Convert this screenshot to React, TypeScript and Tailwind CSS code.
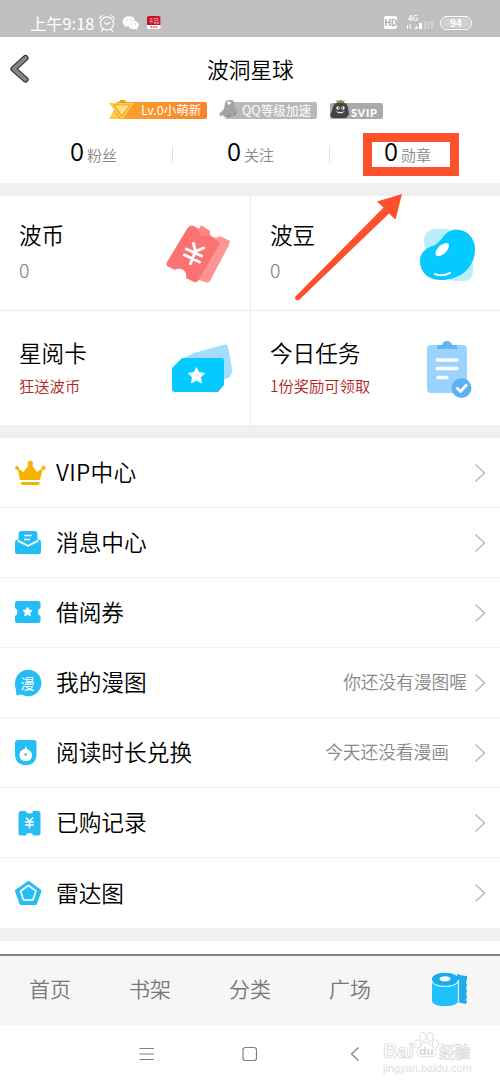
import React from "react";

const Star = ({ x, y, r, fill = "#fff" }: { x: number; y: number; r: number; fill?: string }) => {
  const pts = Array.from({ length: 10 }, (_, i) => {
    const a = (Math.PI * i) / 5 - Math.PI / 2;
    const q = i % 2 ? r * 0.5 : r;
    return `${x + q * Math.cos(a)},${y + q * Math.sin(a)}`;
  }).join(" ");
  return <polygon points={pts} fill={fill} stroke={fill} strokeWidth="0.8" strokeLinejoin="round" />;
};

function StatusBar() {
  return (
    <div className="flex h-[37px] items-start bg-[#bfbfbf] pl-[30px] pt-[14px] text-white">
      <span className="w-[62px] whitespace-nowrap text-[16.3px] font-normal leading-[18px]">上午9:18</span>
      <svg className="ml-[6px] h-[18px] w-[64px]" viewBox="98 14 64 18" fill="none">
        <g stroke="#fff" strokeWidth="1.2" strokeLinecap="round">
          <circle cx="107" cy="23.5" r="6.6" />
          <path d="M104.3 22.3l2.7 2.2 3-2.2M99.5 18.3l3-2.7M114.5 18.3l-3-2.7M103 29.5l-1.5 1.5M111 29.5l1.5 1.5" />
        </g>
        <path d="M129 16.2c-3.6 0-6.3 2.3-6.3 5.2 0 1.7.9 3 2.3 4l-.5 2 2.2-1.2 2 .3c-.6-4 2.6-6.4 6.4-6.2-.5-2.4-3-4.1-6.1-4.1z" fill="#fff" />
        <path d="M133.7 20.8c-3 0-5.2 1.9-5.2 4.2s2.2 4.2 5.2 4.2l1.6-.2 2 1-.5-1.7c1.2-.8 2-2 2-3.3 0-2.3-2.3-4.2-5.1-4.2z" fill="#fff" />
        <g fill="#bfbfbf"><circle cx="127" cy="20" r=".8" /><circle cx="131" cy="20" r=".8" /><circle cx="132" cy="24" r=".7" /><circle cx="135.5" cy="24" r=".7" /></g>
        <rect x="147" y="16" width="13.5" height="13" rx="1.5" fill="#fff" />
        <path d="M147 25v-7.5q0-1.5 1.5-1.5h10.5q1.5 0 1.5 1.5V25z" fill="#c3142d" />
        <path d="M149.5 19h3.5M151 18v5.5M149.5 21.5h3.5M154.5 18.3h3.5v2h-3.5zM154.2 22h1.5v1.5h-1.5zM157 22h1.5v1.5H157z" stroke="#f3a9b0" strokeWidth=".7" />
        <path d="M150.5 27h7" stroke="#d24b59" strokeWidth="1.5" strokeDasharray="1.7 .8" />
      </svg>
      <div className="ml-[222px] mt-[2px] flex h-[13px] w-[13px] items-center justify-center rounded-[2px] bg-white text-[9px] font-bold leading-none tracking-tighter text-[#aaa]">HD</div>
      <div className="ml-[9px] w-[27px]">
        <div className="pl-[2px] text-[8px] font-medium leading-[7px]">4G</div>
        <svg className="block h-[14px] w-[27px]" viewBox="405 21 27 14">
          <path d="M406.5 29v-4M409.2 24v5" stroke="#fff" strokeWidth="1" />
          <path d="M413 29l3.5-3.5V29zM418 23h3v6h-3z" fill="#fff" />
          <path d="M423 21h2v8h-2zM426.5 19h2v10h-2zM430 17h2v12h-2z" fill="#d2d2d2" />
        </svg>
      </div>
      <div className="ml-[7px] mt-[2px] flex h-[14px] w-[32px] items-center justify-center rounded-full border border-white p-[1px]">
        <div className="flex h-full w-full items-center justify-center rounded-full bg-[#d0d0d0] text-[10px] font-bold leading-none">94</div>
      </div>
    </div>
  );
}

function Badges() {
  return (
    <div className="flex h-[22px] pl-[109px] pt-[2px]">
      <div className="relative mt-[1px] flex h-[17px] w-[98px] items-center rounded-[2px] bg-linear-to-r from-[#f9a52d] to-[#f9822d] pl-[32px]">
        <svg className="absolute -top-[2px] left-0 h-[20px] w-[32px]" viewBox="109 100 32 20">
          <path d="M108 101h9l-3 5v14h-6z" fill="#fff" />
          <path d="M109 103h25l-12 17zM109 119l5-9 5 9z" fill="#ffcc44" />
          <path d="M114 105h16l-8 11z" fill="#ffe48a" stroke="#f9a12d" strokeWidth="1.2" />
          <path d="M118.5 103l1.5-3h5l1.5 3z" fill="#e9a12e" />
        </svg>
        <span className="whitespace-nowrap text-[12.5px] font-normal leading-none text-white">Lv.0小萌新</span>
      </div>
      <div className="relative ml-[18px] mt-[1px] flex h-[17px] w-[92px] items-center rounded-[2px] bg-[#b9b9b9] pl-[17px]">
        <svg className="absolute -left-[6px] -top-[3px] h-[20px] w-[24px]" viewBox="219 100 24 20">
          <path d="M224 110l1-6q1-3 4-3h2q3 0 3 3l1 5 3 4-3 4-10 1-3-2-1 1.5-2-2.5z" fill="#a4a4a4" />
          <circle cx="229" cy="104" r="1.7" fill="#fff" /><circle cx="229" cy="117" r="1.6" fill="#8c8c8c" /><circle cx="235" cy="115" r="1.2" fill="#8c8c8c" />
        </svg>
        <span className="whitespace-nowrap text-[12.6px] font-normal leading-none text-white">QQ等级加速</span>
      </div>
      <div className="relative ml-[13px] mt-[2px] flex h-[16px] w-[53px] items-center rounded-[2px] bg-[#aaa] pl-[21px]">
        <svg className="absolute -top-[4px] left-0 h-[20px] w-[20px]" viewBox="330 100 20 20">
          <path d="M330 116q2-3 3-8 1-4.500 6-4.500h3q5 0 6 5l1 7-3 3.500h-14z" fill="#444447" />
          <path d="M336 101l2.500 1 2-1 2.500 1 2-1-1.500 3h-6z" fill="#9c8238" />
          <circle cx="338" cy="109" r="1.700" fill="#fff" /><circle cx="343" cy="109" r="1.700" fill="#fff" />
          <circle cx="338.500" cy="109" r=".7" fill="#222" /><circle cx="342.500" cy="109" r=".7" fill="#222" />
          <path d="M335.500 112q5 2 9.500 0-4.500 5-9.500 0z" fill="#ddd" />
        </svg>
        <span className="mt-[2px] text-[11px] font-black leading-none tracking-[.7px] text-white font-['Lato','Noto_Sans',sans-serif]">SVIP</span>
      </div>
    </div>
  );
}

const Stat = ({ label }: { label: string }) => (
  <div className="flex items-baseline gap-[3px]">
    <span className="text-[25.5px] font-[350] leading-[30px] text-black">0</span>
    <span className="text-[15px] font-[350] leading-[30px] text-[#888]">{label}</span>
  </div>
);

function Header() {
  return (
    <div className="h-[146px]">
      <div className="flex h-[62px] items-center">
        <svg className="ml-[9px] mt-[2px] h-[32px] w-[22px]" viewBox="9 53 22 32" fill="none" strokeLinecap="round" strokeLinejoin="round">
          <path d="M25.5 58L13.5 69 25.5 79.5" stroke="#333" strokeWidth="6.2" />
          <path d="M25.5 58L13.5 69 25.5 79.5" stroke="#858585" strokeWidth="3.8" />
        </svg>
        <h1 className="ml-[176px] mt-[1px] text-[21.7px] font-[350] leading-[26px] text-black">波洞星球</h1>
      </div>
      <Badges />
      <div className="mt-[12px] flex h-[43px] items-center pl-[70px]">
        <div className="-mt-[4px] w-[102px]"><Stat label="粉丝" /></div>
        <div className="mr-[54px] h-[17px] w-px bg-[#e2e2e2]" />
        <div className="-mt-[4px] w-[102px]"><Stat label="关注" /></div>
        <div className="h-[17px] w-px bg-[#e2e2e2]" />
        <div className="ml-[33px] flex h-[43px] w-[96px] items-center border-[9px] border-[#fc512b] pb-[4px] pl-[12px]"><Stat label="勋章" /></div>
      </div>
    </div>
  );
}

const CoinArt = (
  <svg className="h-[70px] w-[80px]" viewBox="160 220 80 70">
    <path d="M200 226q4-1 5 2l5 3c-2 5 7 9 10 5l10 5-1 4-19 36q-2 3-5 1l-14-5z" fill="#ff9494" />
    <path d="M190 226q2-1 4 0l5 3c-1 6 5 8 9 6l11 7q1 2 0 3l-21 36q-2 2-4 1l-8-4c2-8-7-11-11-8l-8-4-.5-3 21-35z" fill="#fb7272" />
    <path d="M199 228c-1 6 5 9 10 7l1-4-5-3z" fill="#fd8585" />
    <path d="M193.500 243.500l2 8M203.500 248l-8 3.500-5 12M186.500 249l15 7M184.500 255l15 7" stroke="#fff" strokeWidth="3" fill="none" strokeLinecap="round" />
  </svg>
);
const BeanArt = (
  <svg className="h-[70px] w-[80px]" viewBox="410 220 80 70">
    <path d="M434 229h15v22h-21q-4-2-4-11 1-10 10-11zM471 258q2 2 2 13 0 10-10 10h-8q-5-1-8-3z" fill="#b9eefa" />
    <path d="M455 229.500C467 229 475 238 475 249 475 267 461 280 441 280 428 280 420 272 420 261 420 252 427 247.500 433 246 442 243 443 231 455 229.500z" fill="#04caff" />
    <path d="M435.500 253q1-5 6-8.500 6-3 7.500 0 .5 4-4 8.500-5 4-8 3-2-1-1.500-3z" fill="#fff" />
    <path d="M435 274q7 3 15-1" stroke="#fff" strokeWidth="2" fill="none" strokeLinecap="round" />
  </svg>
);
const CardArt = (
  <svg className="h-[70px] w-[80px]" viewBox="160 335 80 70">
    <path d="M184 358l10-5 31-8.5q2 0 3 2l4.500 25-3 6-9 3-37-2z" fill="#a3dcff" />
    <path d="M182 358h39q3 0 3 3v24l-6 7h-43q-3 0-3-3v-21z" fill="#04caff" />
    <Star x={196.5} y={376} r={8.5} />
  </svg>
);
const TaskArt = (
  <svg className="h-[70px] w-[80px]" viewBox="410 335 80 70">
    <rect x="427" y="345" width="40" height="48" rx="4" fill="#9bd3ff" />
    <path d="M437 349v-3q0-1 2-1h3q1-4 5-4t5 4h3q2 0 2 1v3z" fill="#62b4f2" />
    <path d="M437 360h20M437 368.5h20M438 377.500h9" stroke="#fff" strokeWidth="3.4" strokeLinecap="round" />
    <circle cx="461.5" cy="388" r="10" fill="#5db2f4" />
    <path d="M456.5 387.5l4 4 6.5-7" stroke="#fff" strokeWidth="2.7" fill="none" />
  </svg>
);

const Tile = ({ title, sub, art, red, cls }: { title: string; sub: string; art: React.ReactNode; red?: boolean; cls: string }) => (
  <div className={`flex justify-between pl-[19px] ${cls}`}>
    <div className={red ? "pt-[28px]" : "pt-[25px]"}>
      <div className="text-[22.6px] font-[350] leading-[28px] text-black">{title}</div>
      <div className={red ? "mt-[7px] text-[15.3px] font-[350] leading-[22px] text-[#b32424]" : "mt-[9px] text-[19.5px] leading-[24px] text-[#777]"}>{sub}</div>
    </div>
    <div className="mr-[10px] mt-[24px]">{art}</div>
  </div>
);

const B = "#24bdf6";
const icons = {
  crown: <svg className="h-[30px] w-[36px]" viewBox="12 457 36 30" fill="#f5b400"><path d="M17.5 467l6 4 6-8h1.5l6 8 6-4-3 12H20z" /><circle cx="30.3" cy="462.5" r="2.7" /><circle cx="17" cy="467" r="2" /><circle cx="43.6" cy="467" r="2" /><path d="M20.5 481h19.5q-.5 3-2 3H23q-2 0-2.5-3z" /></svg>,
  mail: <svg className="h-[30px] w-[36px]" viewBox="12 527 36 30"><path d="M18.5 539v-6q0-3 3-3h13q3 0 3 3v6l-9.5 5z" fill={B} /><path d="M15 541.5v-1.5l3.5-2v2l9.5 5.5 9.5-5.5v-2l3.5 2V551q0 2-2 2H17q-2 0-2-2z" fill={B} /><path d="M18 540l10 5 10-5M24 534.5h8M24 538.500h6" stroke="#fff" strokeWidth="1.400" fill="none" /></svg>,
  ticket: <svg className="h-[30px] w-[36px]" viewBox="12 597 36 30"><path d="M17.5 600H38q2.5 0 2.5 2.5V607q-2.5 1-2.5 4t2.500 4v4.500q0 2.500-2.500 2.500H17.500q-2.500 0-2.500-2.500V615q2.500-1 2.500-4t-2.500-4v-4.500q0-2.500 2.500-2.500z" fill={B} /><Star x={27.5} y={611} r={4.8} /></svg>,
  comic: <div className="relative flex h-[30px] w-[31px] items-center justify-center"><svg className="absolute inset-0 h-[30px] w-[36px]" viewBox="12 668 36 30"><circle cx="28.2" cy="683" r="13.2" fill={B} /><path d="M15 682l1.5 13.5 9-2z" fill={B} /></svg><span className="relative text-[14px] font-normal leading-none text-white">漫</span></div>,
  time: <svg className="h-[30px] w-[36px]" viewBox="12 738 36 30"><path d="M18 740h16q2.5 0 2.5 2.5V754q0 11-10.700 11.200Q15 765 15 754v-11q0-3 3-3z" fill={B} /><path d="M26 746l1 3q5 2 5 6 0 6-6.200 6T19.500 755q0-5 5-6z" fill="#fff" /><circle cx="25.7" cy="754.5" r="1.3" fill={B} /></svg>,
  buy: <svg className="h-[30px] w-[36px]" viewBox="12 809 36 30"><path d="M21 812h5q0 2.5 3.5 2.5t3.500-2.500h5q2.500 0 2.500 2.500V834q0 2.500-2.500 2.500h-5q0-2.500-3.500-2.500t-3.500 2.500h-5q-2.500 0-2.500-2.500v-19.500q0-2.500 2.500-2.500z" fill={B} /><path d="M26 818.5l3.5 4 3.5-4M29.500 822.500v7M25 823h9M25 826h9" stroke="#fff" strokeWidth="1.5" fill="none" /></svg>,
  radar: <svg className="h-[30px] w-[36px]" viewBox="12 878 36 30" strokeLinejoin="round"><path d="M28.5 882.5l11.5 8.5-4.5 12.5h-14.500L16.500 891z" fill={B} stroke={B} strokeWidth="3" /><path d="M28.5 885.5l7.5 5.5-3 9h-9.500l-3-9z" fill={B} stroke="#fff" strokeWidth="1.7" /></svg>,
};

const rows = [
  { icon: icons.crown, label: "VIP中心", spacing: "tracking-[.3px]" },
  { icon: icons.mail, label: "消息中心" },
  { icon: icons.ticket, label: "借阅券" },
  { icon: icons.comic, label: "我的漫图", note: "你还没有漫图喔", gap: "mr-[7px]" },
  { icon: icons.time, label: "阅读时长兑换", note: "今天还没看漫画", gap: "mr-[25px]" },
  { icon: icons.buy, label: "已购记录" },
  { icon: icons.radar, label: "雷达图" },
];

export default function App() {
  return (
    <div className="h-[1084px] w-[500px] overflow-hidden bg-white font-['Noto_Sans_CJK_SC','Noto_Sans',sans-serif] font-light">
      <StatusBar />
      <div className="relative">
        <Header />
        <div className="h-[13px] bg-[#f0f0f0]" />
        <div className="grid grid-cols-[251px_249px] grid-rows-[115px_114px]">
          <Tile title="波币" sub="0" art={CoinArt} cls="border-b border-r border-[#ebebeb]" />
          <Tile title="波豆" sub="0" art={BeanArt} cls="border-b border-[#ebebeb]" />
          <Tile title="星阅卡" sub="狂送波币" art={CardArt} red cls="border-r border-[#ebebeb]" />
          <Tile title="今日任务" sub="1份奖励可领取" art={TaskArt} red cls="" />
        </div>
        <svg className="absolute left-[290px] top-[153px] h-[115px] w-[120px]" viewBox="290 190 120 115">
          <path d="M402 194L377 201.5 383.5 207.5 295 297Q295 301 299 300L389 213.5 395.5 219.5z" fill="#fc512b" />
        </svg>
      </div>
      <div className="h-[13px] bg-[#f0f0f0]" />
      <div>
        {rows.map((r, i) => (
          <div key={r.label} className={`flex h-[70px] items-center pl-[12px] pr-[14px] ${i < 6 ? "border-b border-[#efefef]" : ""}`}>
            <div className="w-[44px]">{r.icon}</div>
            <span className={`-mt-[1px] text-[22.7px] font-[350] leading-[30px] text-black ${r.spacing ?? ""}`}>{r.label}</span>
            <span className={`-mt-[3px] ml-auto text-[17.7px] font-[350] leading-[26px] text-[#888] ${r.gap ?? ""}`}>{r.note}</span>
            <svg className="h-[20px] w-[12px]" viewBox="0 0 12 20" fill="none"><path d="M1.5 1.5L10.5 10 1.5 18.5" stroke="#bcbcbc" strokeWidth="1.6" /></svg>
          </div>
        ))}
      </div>
      <div className="h-[13px] bg-[#f0f0f0]" />
      <div className="h-[13px]" />
      <div className="flex h-[71px] items-center border-t-2 border-[#858585] bg-[#f6f6f6]">
        {["首页", "书架", "分类", "广场"].map((t) => (
          <div key={t} className="-mt-[5px] w-[100px] text-center text-[21px] font-[350] leading-[26px] text-[#777]">{t}</div>
        ))}
        <div className="-mt-[4px] flex w-[100px] justify-center">
          <svg className="h-[38px] w-[40px]" viewBox="430 970 40 38">
            <path d="M457 974q5 2 10 2v4l-1 2 1 3-1 3 1 3-1 3 1 3-1 3 1 2-1 2q-5-1-9-2z" fill="#1aaeea" />
            <path d="M432 981q0-8 13-8t13 8v19q0 6-13 6t-13-6z" fill="#1fc0fc" />
            <ellipse cx="445" cy="979" rx="13" ry="6.2" fill="#19adeb" />
            <path d="M431.5 980q1 6.5 13.5 6.5T458.500 980V1002" stroke="#f6f6f6" strokeWidth="1.2" fill="none" />
            <ellipse cx="445" cy="978.8" rx="5.5" ry="2.6" fill="#fff" />
          </svg>
        </div>
      </div>
      <div className="flex h-[59px] items-start pt-[20px]">
        <svg className="ml-[138px] h-[18px] w-[224px]" viewBox="138 1045 224 18" fill="none" stroke="#808080" strokeWidth="1.2">
          <path d="M139.500 1048.500h14.500M139.500 1054h14.500M139.500 1059.500h14.500" />
          <rect x="243" y="1047.500" width="13.500" height="13" rx="2.500" />
          <path d="M358.500 1047.500l-7 6.500 7 6.500" />
        </svg>
        <div className="-mt-[19px] ml-[21px] w-[94px] text-[#e0e0e0]">
          <div className="relative flex h-[36px] items-end whitespace-nowrap font-bold leading-[22px] text-white [-webkit-text-stroke:0.7px_#d2d2d2]">
            <span className="text-[20px] font-['Liberation_Sans',sans-serif]">Bai</span>
            <svg className="-mx-[1px] mb-[2px] h-[30px] w-[27px]" viewBox="0 0 30 32">
              <g fill="#fff" stroke="#dadada" strokeWidth="1"><ellipse cx="5" cy="15" rx="3.5" ry="4.5" /><ellipse cx="11" cy="7" rx="3.5" ry="5" /><ellipse cx="19" cy="7" rx="3.5" ry="5" /><ellipse cx="25" cy="15" rx="3.5" ry="4.5" /><path d="M15 13q4 0 7 5 6 4 3 9-2 3-10 2-8 1-10-2-2-5 3-9 3-5 7-5z" /></g>
              <text className="[-webkit-text-stroke:0px]" x="15" y="27" textAnchor="middle" fontSize="13" fill="#d2d2d2" fontFamily="Liberation Sans">du</text>
            </svg>
            <span className="text-[15.5px]">经验</span>
          </div>
          <div className="-mt-[1px] text-[11px] font-normal leading-[14px] font-['Liberation_Sans',sans-serif]">jingyan.baidu.com</div>
        </div>
      </div>
    </div>
  );
}
